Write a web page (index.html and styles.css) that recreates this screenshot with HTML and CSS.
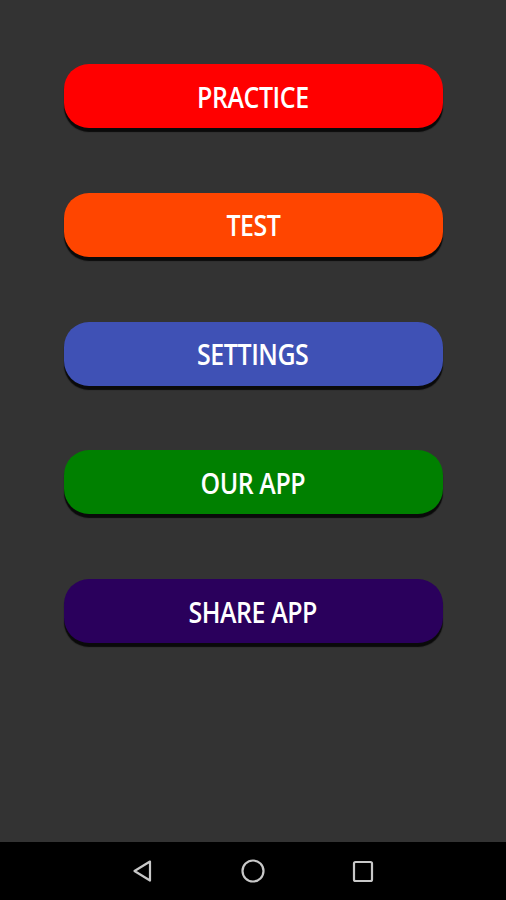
FILE: index.html
```html
<!DOCTYPE html>
<html lang="en">
<head>
	<meta charset="UTF-8">
	<meta content="width=device-width, initial-scale=1.0" name="viewport">
	<title>Menu</title>
	<link rel="stylesheet" href="styles.css">
</head>
<body>
<div class="screen">
	<div class="menu">
		<button type="button" class="btn red"><span class="lbl">PRACTICE</span></button>
		<button type="button" class="btn orange"><span class="lbl">TEST</span></button>
		<button type="button" class="btn blue"><span class="lbl">SETTINGS</span></button>
		<button type="button" class="btn green"><span class="lbl">OUR APP</span></button>
		<button type="button" class="btn purple"><span class="lbl">SHARE APP</span></button>
	</div>
	<div class="navbar">
		<svg class="nav-ico" width="24" height="24" viewBox="0 0 24 24"><path d="M19 2.5 L3.5 12 L19 21.5 Z" fill="none" stroke="#c8c8c8" stroke-width="2.2" stroke-linejoin="round"/></svg>
		<svg class="nav-ico" width="26" height="26" viewBox="0 0 26 26"><circle cx="13" cy="13" r="10.5" fill="none" stroke="#c8c8c8" stroke-width="2.2"/></svg>
		<svg class="nav-ico" width="24" height="24" viewBox="0 0 24 24"><rect x="3" y="3" width="18" height="19" rx="1.5" fill="none" stroke="#c8c8c8" stroke-width="2.2"/></svg>
	</div>
</div>
</body>
</html>
```

FILE: styles.css
```css
html, body {
	margin: 0;
	background: #333;
}
.screen {
	height: 900px;
	display: flex;
	flex-direction: column;
}
.menu {
	flex: 1;
	display: flex;
	flex-direction: column;
	align-items: center;
	gap: 64.75px;
	padding-top: 64px;
}
.btn {
	width: 379px;
	height: 64px;
	flex-shrink: 0;
	border: none;
	border-radius: 25px;
	box-shadow: 0 4px 1px #0a0a0a;
	color: #fff;
	font-family: "Open Sans", sans-serif;
	font-weight: 600;
	font-size: 29px;
	padding: 0;
}
.lbl {
	display: inline-block;
	transform: scaleX(0.86);
	letter-spacing: -0.5px;
}
.red { background: #ff0000; }
.orange { background: #ff4500; }
.blue { background: #3f51b5; }
.green { background: #008000; }
.purple { background: #2a005c; }
.navbar {
	height: 58px;
	background: #000;
	display: flex;
	align-items: center;
	justify-content: space-around;
	padding: 0 88px;
}
.nav-ico {
	display: block;
}
```
